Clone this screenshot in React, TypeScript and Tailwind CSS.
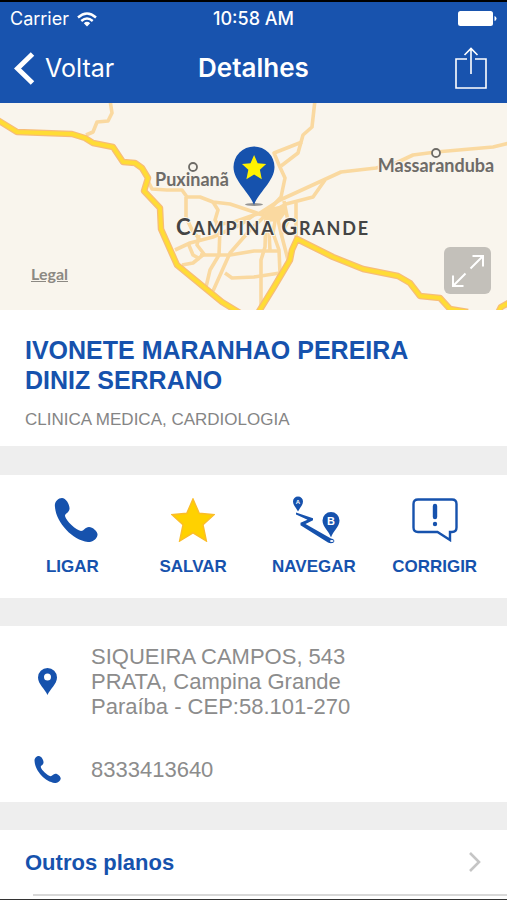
import type { ReactNode } from 'react';

const PHONE_PATH =
  'M1 9C0 4 4 0 8 0c4 0 8 7 7.500 11C15 15 11 15 11 18c1 5 11 14 16 15 3 0 4-4 8-4s9 5 8.500 8c-.5 4-5.500 7.500-9.500 7C18 42 2 24 1 9Z';

const majorRoads = [
  'M-4 16 17 29 72 31 85 35 93 40 113 44 123 59 135 60 142 65 148 75 144 88 160 105 161 126 177 162 222 199 240 210',
  'M258 210 274 184 290 157 292 147 297 136 333 154 363 166 398 173 410 180 420 193 440 195 450 206 468 209',
  'M498 210 501 204 512 198',
];

const minorRoads = [
  'M110-3 112 10 108 18 97 19 93 29 86 32',
  'M148 78 152 86 167 87 182 87 187 94 200 94 213 99 230 101 254 109 268 114',
  'M186 94V114L192 127 200 137',
  'M213 99 218 107 215 117 220 125 219 152 210 167 206 184',
  'M175 147 190 140 213 134 240 122 254 112 268 108',
  'M182 162 193 160 204 151 197 142 199 132',
  'M188 140 193 152 200 156',
  'M200 152H230L254 148H278',
  'M213 188 230 150 251 126 268 110',
  'M225 170 232 175 254 174 280 170',
  'M254 112 234 119 215 122',
  'M276 112 273 130 279 147 280 170 272 188',
  'M261 207V157L265 144 266 112',
  'M268 112 270 147',
  'M288 157 281 130 276 108',
  'M315-3 312 24 303 32 298 50 281 63',
  'M302 39 274 50 279 62 285 75 281 94 270 106',
  'M510 40 493 44 436 49 413 52 396 60 376 65 341 69 280 97 260 110',
  'M325 77 313 94 286 101 265 113',
  'M296 100V134',
  'M284 98 288 118 281 132',
];

const STAR_POINTS = '22,0 28.500,15 44,16.500 32.500,27 36,44 22,35.500 8,44 11.500,27 0,16.500 15.500,15';

function PhoneIcon({ className }: { className: string }) {
  return (
    <svg viewBox="0 0 44 44" className={className} fill="currentColor" aria-hidden="true">
      <path d={PHONE_PATH} />
    </svg>
  );
}

function StarIcon() {
  return (
    <svg viewBox="-1 -1 46 46" className="size-[44px]" aria-hidden="true">
      <polygon points={STAR_POINTS} fill="#ffd100" stroke="#fbbd2a" strokeWidth="1.500" />
    </svg>
  );
}

function RouteIcon() {
  return (
    <svg viewBox="0 0 48 48" className="ml-1 size-[48px]" aria-hidden="true">
      <g fill="currentColor">
        <path d="M6 15.500C4 11.500 1 9 1 5.500a5 5 0 0 1 10 0C11 9 8 11.500 6 15.500Z" />
        <path d="M39 41.500C37 35 30.500 31 30.500 24.500a8.500 8.500 0 0 1 17 0C47.500 31 41 35 39 41.500Z" />
        <path d="M4 16.500 21 22.300v2L13.500 28 39 42.500c3 .5 4 2 3 3.500-1 1.500-4 1.500-6 .5L8.500 29.300v-2.600L15.500 23.700 4 18.500Z" />
      </g>
      <ellipse cx="39.800" cy="45" rx="1.800" ry="1" fill="#fff" />
      <g fill="#fff" textAnchor="middle" className="font-['Liberation_Sans',sans-serif] font-bold">
        <text x="6" y="8" fontSize="6">A</text>
        <text x="39" y="29" fontSize="11">B</text>
      </g>
    </svg>
  );
}

function ReportIcon() {
  return (
    <svg viewBox="0 0 46 44" className="h-[44px] w-[46px]" fill="none" stroke="currentColor" aria-hidden="true">
      <path
        d="M6 1.500H40Q44.500 1.500 44.500 6V29.500Q44.500 34 40 34H38V42L25.500 34H6Q1.500 34 1.500 29.500V6Q1.500 1.500 6 1.500Z"
        strokeWidth="2.400"
      />
      <path d="M23 8V19" strokeWidth="4.400" strokeLinecap="round" />
      <circle cx="23" cy="26" r="2.200" fill="currentColor" stroke="none" />
    </svg>
  );
}

function StatusBar() {
  return (
    <div className="grid grid-cols-3 items-center px-[10px] pt-[2px] text-[18px] leading-[30px]">
      <div className="flex items-center gap-2">
        <span>Carrier</span>
        <svg viewBox="0 0 20 15" className="h-[15px] w-[20px]" fill="none" stroke="currentColor" strokeWidth="2.400" aria-hidden="true">
          <path d="M1 5.500Q10-2.500 19 5.500" />
          <path d="M4.300 9Q10 4 15.700 9" />
          <path d="M10 14.500 6.800 11.200Q10 8.500 13.200 11.200Z" fill="currentColor" stroke="none" />
        </svg>
      </div>
      <span className="text-center font-medium">10:58 AM</span>
      <svg viewBox="0 0 39 16" className="h-[16px] w-[39px] justify-self-end" fill="currentColor" aria-hidden="true">
        <rect width="35" height="15" rx="2.500" />
        <path d="M36.500 5q2 .5 2 2.500t-2 2.500Z" />
      </svg>
    </div>
  );
}

function NavBar() {
  return (
    <div className="grid grid-cols-3 items-center px-[14px] pt-[1px] pb-[2px] text-[26px] leading-[66px]">
      <button type="button" className="flex items-center gap-[10px] text-[25px]">
        <svg viewBox="0 0 21 33" className="h-[33px] w-[21px]" fill="none" stroke="currentColor" strokeWidth="5" aria-hidden="true">
          <path d="M18.500 2 3.500 16.500 18.500 31" />
        </svg>
        Voltar
      </button>
      <h1 className="text-center font-semibold">Detalhes</h1>
      <button type="button" aria-label="Compartilhar" className="justify-self-end pr-[6px]">
        <svg viewBox="0 0 32 42" className="h-[42px] w-[32px]" fill="none" stroke="currentColor" strokeWidth="1.600" aria-hidden="true">
          <path d="M12 12H1V41H31V12H20M16 27V1.500M9.500 8 16 1.500 22.500 8" />
        </svg>
      </button>
    </div>
  );
}

function MapView() {
  return (
    <section className="relative h-[207px] overflow-hidden bg-[#f9f5ed]">
      <svg viewBox="0 0 507 207" preserveAspectRatio="xMidYMid slice" className="h-full w-full">
        <g fill="none" strokeLinejoin="round">
          <g stroke="#fad9a0" strokeWidth="3.600">
            {minorRoads.map(d => <path key={d} d={d} />)}
          </g>
          <path d="M264 106 284 102 286 110 280 118 266 119Z" fill="#fad9a0" />
          <g stroke="#f7bd78" strokeWidth="6.500">
            {majorRoads.map(d => <path key={d} d={d} />)}
          </g>
          <g stroke="#ffdc35" strokeWidth="4">
            {majorRoads.map(d => <path key={d} d={d} />)}
          </g>
        </g>

        {/* Towns */}
        <g fill="#f9f5ed" stroke="#6e6b66" strokeWidth="1.800">
          <circle cx="193" cy="64" r="4" />
          <circle cx="436" cy="50" r="4" />
        </g>
        <g
          textAnchor="middle"
          fill="#6e6b68"
          stroke="#f9f5ed"
          strokeWidth="2"
          paintOrder="stroke"
          className="font-['Lato',sans-serif] font-bold"
        >
          <text x="192" y="83" fontSize="18">Puxinanã</text>
          <text x="436" y="69" fontSize="18">Massaranduba</text>
          <text x="273" y="132" fontSize="18" fill="#444" className="tracking-widest">
            <tspan fontSize="22">C</tspan>AMPINA <tspan fontSize="22">G</tspan>RANDE
          </text>
        </g>

        {/* Selected clinic */}
        <ellipse cx="254" cy="101.500" rx="9" ry="1.500" fill="#555" opacity="0.6" />
        <path d="M254 102C250 90 233.500 78 233.500 64a20.500 20.500 0 0 1 41 0C274.500 78 258 90 254 102Z" fill="#1652ad" />
        <polygon points={STAR_POINTS} fill="#fff200" transform="translate(242 52) scale(.55)" />
      </svg>

      <a
        href="#legal"
        className="absolute bottom-[26px] left-[31px] font-['Lato',sans-serif] text-[16px] leading-[20px] font-bold text-[#8c8983] underline"
      >
        Legal
      </a>
      <button
        type="button"
        aria-label="Expandir mapa"
        className="absolute right-4 bottom-4 flex size-[47px] items-center justify-center rounded-md bg-[#c3c0ba] text-white"
      >
        <svg viewBox="0 0 32 32" className="size-[32px]" fill="none" stroke="currentColor" strokeWidth="2" aria-hidden="true">
          <path d="M18.500 13.500 31 1M20.500 1H31V11.500M13.500 18.500 1 31M1 20.500V31H11.500" />
        </svg>
      </button>
    </section>
  );
}

function Action({ label, children }: { label: string; children: ReactNode }) {
  return (
    <button type="button" className="flex flex-col items-center text-[17px] leading-[20px] font-bold">
      <span className="flex h-[48px] items-center justify-center">{children}</span>
      <span className="mt-[13px]">{label}</span>
    </button>
  );
}

export default function App() {
  return (
    <div className="min-h-screen border-t-2 border-b border-t-black border-b-[#333] bg-white font-['Liberation_Sans',Arial,sans-serif] text-[#1652ad]">
      <header className="bg-[#1853ae] font-['Inter',sans-serif] text-white">
        <StatusBar />
        <NavBar />
      </header>

      <main>
        <MapView />

        <section className="px-[25px] pt-[25px] pb-[16px]">
          <h2 className="max-w-[400px] text-[25px] leading-[30px] font-bold">
            IVONETE MARANHAO PEREIRA DINIZ SERRANO
          </h2>
          <p className="mt-[15px] text-[17px] leading-[20px] text-[#858585]">CLINICA MEDICA, CARDIOLOGIA</p>
        </section>

        <section className="grid grid-cols-4 border-t-[29px] border-[#eee] px-3 pt-[21px] pb-[21px]">
          <Action label="LIGAR">
            <PhoneIcon className="ml-2 size-[44px]" />
          </Action>
          <Action label="SALVAR">
            <StarIcon />
          </Action>
          <Action label="NAVEGAR">
            <RouteIcon />
          </Action>
          <Action label="CORRIGIR">
            <ReportIcon />
          </Action>
        </section>

        <section className="grid grid-cols-[27px_1fr] items-center gap-x-[30px] gap-y-[37px] border-y-[28px] border-[#eee] pt-[18px] pr-[25px] pb-[19px] pl-[34px] text-[22px] leading-[25px] text-[#8c8c8c]">
          <svg viewBox="0 0 19 27" className="h-[27px] w-[19px] justify-self-center text-[#1652ad]" fill="currentColor" aria-hidden="true">
            <path
              fillRule="evenodd"
              d="M9.500 27C7 21 0 16 0 9.500a9.500 9.500 0 0 1 19 0C19 16 12 21 9.500 27ZM9.500 12.500a3.500 3.500 0 1 0 0-7 3.500 3.500 0 0 0 0 7Z"
            />
          </svg>
          <address className="not-italic">
            SIQUEIRA CAMPOS, 543
            <br />
            PRATA, Campina Grande
            <br />
            Paraíba - CEP:58.101-270
          </address>
          <PhoneIcon className="size-[27px] justify-self-center text-[#1652ad]" />
          <a href="tel:8333413640">8333413640</a>
        </section>

        <a href="#planos" className="flex h-[64px] items-center justify-between pr-[26px] pl-[25px] text-[22px] font-bold">
          Outros planos
          <svg viewBox="0 0 12 20" className="h-[20px] w-[12px] text-[#c5c5c5]" fill="none" stroke="currentColor" strokeWidth="2.600" aria-hidden="true">
            <path d="M1 1 10 10 1 19" />
          </svg>
        </a>
        <hr className="ml-[33px] border-t-2 border-[#d8d8d8]" />
      </main>
    </div>
  );
}
